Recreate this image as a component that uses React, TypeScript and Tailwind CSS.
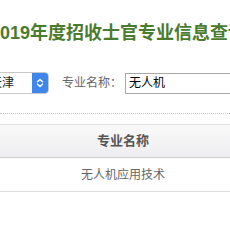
import React from 'react';

const cjk = { fontFamily: '"Liberation Sans", "Noto Sans CJK SC", sans-serif' };

function SelectArrows() {
  return (
    <svg width="8" height="10" viewBox="0 0 8 10" fill="none" stroke="white" strokeWidth="1.4" strokeLinecap="round" strokeLinejoin="round">
      <path d="M1.5 3.8 L4 1.5 L6.5 3.8" />
      <path d="M1.5 6.2 L4 8.5 L6.5 6.2" />
    </svg>
  );
}

export default function App() {
  return (
    <div className="w-[230px] h-[230px] overflow-hidden bg-white" style={cjk}>
      {/* 标题 */}
      <div className="mt-[21px] ml-[-10px] whitespace-nowrap text-[18px] leading-[24px] font-bold text-[#4b7b2e]">
        2019年度招收士官专业信息查询
      </div>

      {/* 查询条件 */}
      <div className="mt-[27px] flex items-center whitespace-nowrap">
        <div className="shrink-0 ml-[-30px] w-[79px] h-[22px] flex border border-[#c8c8c8] rounded-[4px] bg-white">
          <div className="flex-1 pl-[19px] text-[12px] leading-[20px] text-[#222]">天津</div>
          <div className="w-[16px] h-full bg-[#3d86ef] rounded-r-[3px] flex items-center justify-center">
            <SelectArrows />
          </div>
        </div>
        <span className="shrink-0 ml-[13px] text-[12px] text-[#666]">专业名称：</span>
        <div className="shrink-0 ml-[3px] w-[130px] h-[21px] border border-[#a9a9a9] pl-[3px] text-[12px] leading-[19px] text-black">
          无人机
        </div>
      </div>

      <div className="mt-[19px] border-t border-dotted border-[#c8c8c8]" />

      {/* 结果表格 */}
      <div className="mt-[10px] w-[246px]">
        <div className="h-[34px] flex items-center justify-center border-t border-b border-t-[#e0e0e0] border-b-[#cfcfcf] bg-gradient-to-b from-[#f9f9fa] to-[#eeeef0] text-[13px] font-bold text-[#555]">
          专业名称
        </div>
        <div className="h-[34px] flex items-center justify-center border-b border-[#dcdcdc] text-[12px] text-[#666]">
          无人机应用技术
        </div>
      </div>
    </div>
  );
}
